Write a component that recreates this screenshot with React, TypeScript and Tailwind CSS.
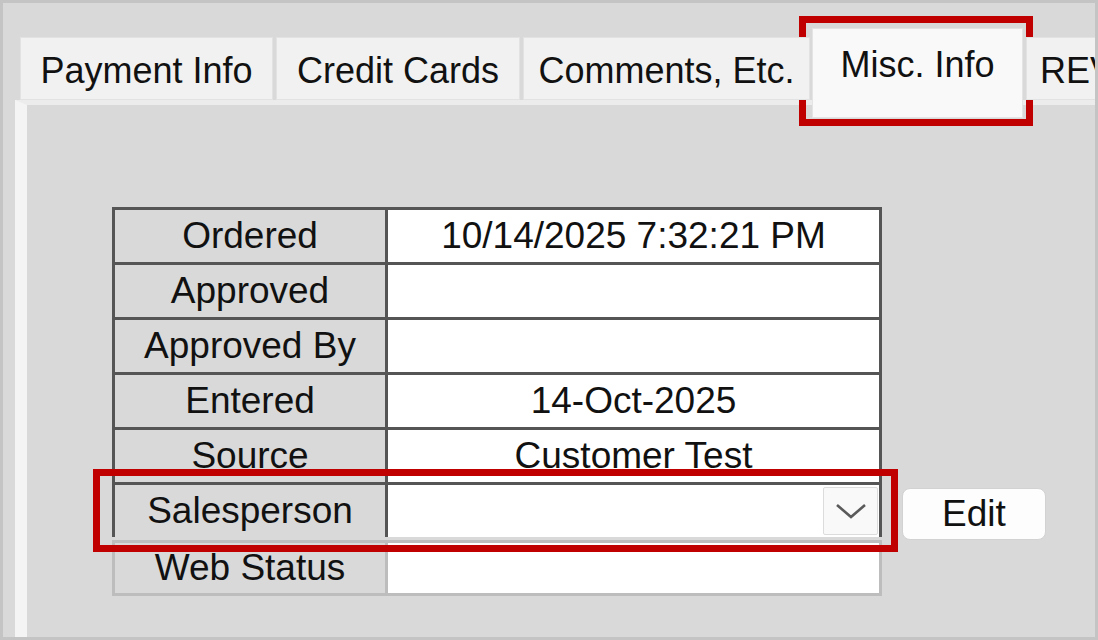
import React from 'react';

const rows = [
  { label: 'Ordered', value: '10/14/2025 7:32:21 PM' },
  { label: 'Approved', value: '' },
  { label: 'Approved By', value: '' },
  { label: 'Entered', value: '14-Oct-2025' },
  { label: 'Source', value: 'Customer Test' },
];

const Tab = ({ label, className }: { label: string; className: string }) => (
  <div
    className={`mt-[10px] h-[63px] shrink-0 border border-[#e2e2e2] bg-[#f1f1f1] pt-[2px] text-center leading-[61px] ${className}`}
  >
    {label}
  </div>
);

const Row = ({ label, value }: { label: string; value: string }) => (
  <div className="flex h-[55px] w-[770px] border-x-[3px] border-t-[3px] border-[#555555]">
    <div className="w-[273px] border-r-[3px] border-[#555555] bg-[#d9d9d9] text-center leading-[52px]">{label}</div>
    <div className="flex-1 bg-white text-center leading-[52px]">{value}</div>
  </div>
);

export default function App() {
  return (
    <div className="relative flex h-[640px] w-[1098px] flex-col overflow-hidden border-[3px] border-[#c4c4c4] bg-[#d9d9d9] font-['Liberation_Sans',Arial,sans-serif] text-[36px] text-[#111111]">
      {/* tab strip */}
      <div className="relative z-10 mt-[24px] flex h-[91px] items-start pl-[17px]">
        <Tab label="Payment Info" className="w-[253px]" />
        <Tab label="Credit Cards" className="ml-[3px] w-[244px]" />
        <Tab label="Comments, Etc." className="ml-[3px] w-[287px]" />
        <div className="ml-[2px] mt-[1px] h-[90px] w-[211px] shrink-0 border border-[#e4e4e4] bg-[#f9f9f9] pt-[5px] text-center leading-[61px]">
          Misc. Info
        </div>
        <div className="ml-[3px] mt-[10px] h-[63px] w-[160px] shrink-0 border border-[#e2e2e2] bg-[#f1f1f1] pl-[13px] pt-[2px] leading-[61px]">
          REV
        </div>
      </div>

      {/* panel */}
      <div className="-mt-[18px] ml-[12px] flex-1 border-l-[12px] border-t-[5px] border-l-[#f4f4f4] border-t-[#ececec] pl-[85px] pt-[102px] text-[37px]">
        <div className="flex flex-col">
          {rows.map((r) => (
            <Row key={r.label} label={r.label} value={r.value} />
          ))}

          <div className="flex items-start">
            <div className="flex h-[55px] w-[770px] border-x-[3px] border-t-[3px] border-[#555555]">
              <div className="w-[273px] border-r-[3px] border-[#555555] bg-[#d9d9d9] text-center leading-[52px]">
                Salesperson
              </div>
              <div className="flex flex-1 bg-white">
                <div className="flex-1" />
                <div className="mb-[2px] mr-[1px] mt-[2px] flex w-[55px] items-center justify-center rounded-[2px] border border-[#dcdcdc] bg-[#f9f9f9]">
                  <svg width="32" height="18" viewBox="0 0 32 18" fill="none">
                    <path d="M2 3 L16 15 L30 3" stroke="#5a5a5a" strokeWidth="2.6" />
                  </svg>
                </div>
              </div>
            </div>
            <button className="ml-[20px] mt-[6px] h-[52px] w-[144px] rounded-[8px] border border-[#d2d2d2] bg-[#fdfdfd] text-center leading-[50px] text-[#111111]">
              Edit
            </button>
          </div>

          <div className="flex h-[56px] w-[770px] border-[3px] border-[#bdbdbd]">
            <div className="w-[273px] border-r-[3px] border-[#bdbdbd] bg-[#d9d9d9] text-center leading-[50px]">
              Web Status
            </div>
            <div className="flex-1 bg-white" />
          </div>
        </div>
      </div>

      {/* annotation boxes */}
      <div className="absolute left-[796px] top-[13px] h-[110px] w-[234px] border-[7px] border-[#c00000]" />
      <div className="absolute left-[90px] top-[466px] h-[83px] w-[805px] border-[7px] border-[#c00000]" />
    </div>
  );
}
